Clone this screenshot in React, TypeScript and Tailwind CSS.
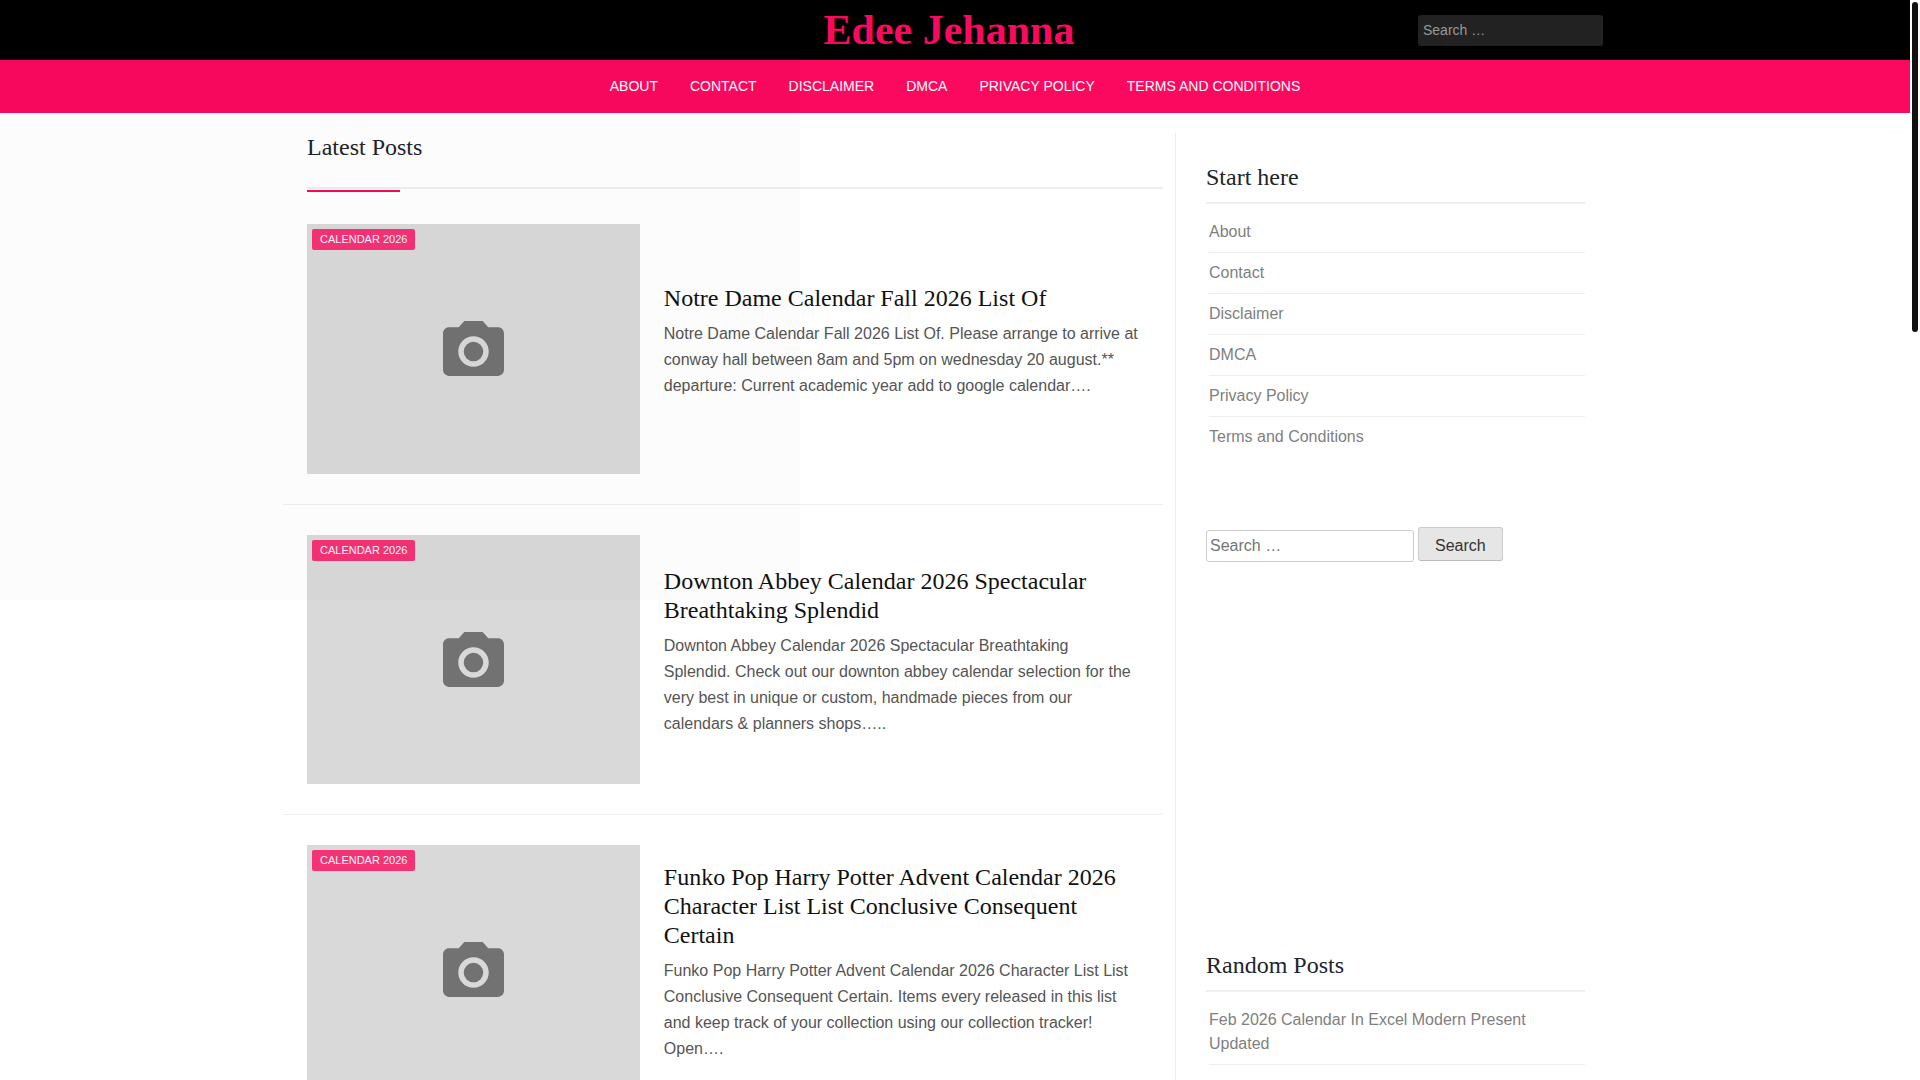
const pages = [
  "About",
  "Contact",
  "Disclaimer",
  "DMCA",
  "Privacy Policy",
  "Terms and Conditions"
];

const randomPosts = ["Feb 2026 Calendar In Excel Modern Present Updated"];

const posts = [
  {
    title: "Notre Dame Calendar Fall 2026 List Of",
    category: "Calendar 2026",
    excerpt:
      "Notre Dame Calendar Fall 2026 List Of. Please arrange to arrive at conway hall between 8am and 5pm on wednesday 20 august.** departure: Current academic year add to google calendar…."
  },
  {
    title: "Downton Abbey Calendar 2026 Spectacular Breathtaking Splendid",
    category: "Calendar 2026",
    excerpt:
      "Downton Abbey Calendar 2026 Spectacular Breathtaking Splendid. Check out our downton abbey calendar selection for the very best in unique or custom, handmade pieces from our calendars & planners shops….."
  },
  {
    title: "Funko Pop Harry Potter Advent Calendar 2026 Character List List Conclusive Consequent Certain",
    category: "Calendar 2026",
    excerpt:
      "Funko Pop Harry Potter Advent Calendar 2026 Character List List Conclusive Consequent Certain. Items every released in this list and keep track of your collection using our collection tracker! Open…."
  }
];

function CameraIcon() {
  return (
    <svg viewBox="2 2 20 18" className="w-[61px] h-[55px] fill-[#727272]" aria-hidden="true">
      <circle cx="12" cy="12" r="3.2" />
      <path d="M9 2L7.17 4H4c-1.1 0-2 .9-2 2v12c0 1.1.9 2 2 2h16c1.1 0 2-.9 2-2V6c0-1.1-.9-2-2-2h-3.17L15 2H9zm3 15c-2.76 0-5-2.24-5-5s2.24-5 5-5 5 2.24 5 5-2.24 5-5 5z" />
    </svg>
  );
}

function Header() {
  return (
    <header>
      <div className="bg-black">
        <div className="mx-auto max-w-[1320px] h-[60px] pr-3 grid grid-cols-[1fr_auto_1fr] items-center">
          <a
            href="#"
            className="col-start-2 font-['Liberation_Serif',serif] font-bold text-[42px] leading-[60px] text-[#fb095e]"
          >
            Edee Jehanna
          </a>
          <form className="flex justify-end">
            <input
              type="search"
              aria-label="Search for"
              placeholder="Search …"
              className="w-[185px] h-[31px] rounded-[3px] bg-[#222] px-[5px] text-sm text-white placeholder:text-[#999]"
            />
          </form>
        </div>
      </div>

      <nav className="bg-[#fb095e]">
        <ul className="flex justify-center">
          {pages.map(p => (
            <li key={p}>
              <a href="#" className="block px-4 text-sm leading-[53px] text-white uppercase">
                {p}
              </a>
            </li>
          ))}
        </ul>
      </nav>
    </header>
  );
}

function Post({ post }: { post: (typeof posts)[number] }) {
  return (
    <article className="flex items-center border-b border-[#eee] px-6 pb-[30px]">
      <div className="relative w-2/5 aspect-4/3 shrink-0 bg-[#d9d9d9] flex items-center justify-center">
        <CameraIcon />
        <a
          href="#"
          className="absolute left-[5px] top-[5px] rounded-[2px] bg-[#fb095e] px-2 text-[11px] leading-[21px] text-white uppercase opacity-80"
        >
          {post.category}
        </a>
      </div>

      <div className="pl-6 pb-[14px]">
        <h2 className="font-['Liberation_Serif',serif] text-2xl leading-[29px] text-[#111] mb-2">
          <a href="#">{post.title}</a>
        </h2>
        <p className="text-base leading-[26px] text-[#555]">{post.excerpt}</p>
      </div>
    </article>
  );
}

function WidgetTitle({ children }: { children: string }) {
  return (
    <h2 className="font-['Liberation_Serif',serif] text-2xl leading-[29px] text-[#212529] pb-[10px] mb-2 border-b-2 border-[#eee]">
      {children}
    </h2>
  );
}

function Sidebar() {
  return (
    <aside className="w-[452px] shrink-0 border-l border-[#eee] pl-[30px] pr-[42px]">
      <section className="pt-[30px] mb-10">
        <WidgetTitle>Start here</WidgetTitle>
        <ul className="pl-[3px]">
          {pages.map(p => (
            <li key={p} className="py-2 border-b border-[#eee] last:border-b-0">
              <a href="#" className="block text-base leading-6 text-[#808080]">{p}</a>
            </li>
          ))}
        </ul>
      </section>

      <section className="pt-[30px] mb-10">
        <form className="flex items-baseline gap-1">
          <input
            type="search"
            aria-label="Search for"
            placeholder="Search …"
            className="w-[208px] h-8 rounded-[3px] border border-[#ccc] px-[3px] text-base text-[#666] placeholder:text-[#757575]"
          />
          <button
            type="submit"
            className="rounded-[3px] border border-[#ccc] border-b-[#bbb] bg-[#e6e6e6] px-4 pt-[10px] pb-[6px] text-base leading-4 text-[#333]"
          >
            Search
          </button>
        </form>
      </section>

      {/* ad slot */}
      <section className="pt-[30px] mb-10">
        <div className="h-[249px]" />
      </section>

      <section className="pt-[30px] mb-10">
        <WidgetTitle>Random Posts</WidgetTitle>
        <ul className="pl-[3px]">
          {randomPosts.map(p => (
            <li key={p} className="py-2 border-b border-[#eee]">
              <a href="#" className="block text-base leading-6 text-[#808080]">{p}</a>
            </li>
          ))}
        </ul>
      </section>
    </aside>
  );
}

export default function App() {
  return (
    <div className="relative flex h-screen overflow-hidden bg-white font-['Liberation_Sans',sans-serif]">
      <div className="flex-1 overflow-y-auto [scrollbar-width:none]">
        <Header />

        <div className="mx-auto max-w-[1344px] mt-5 flex gap-3">
          <main className="flex-1">
            <div className="relative ml-6 mb-[35px] border-b-2 border-[#eee] pb-[25px]">
              <h1 className="font-['Liberation_Serif',serif] text-2xl leading-[29px] text-[#212529]">
                Latest Posts
              </h1>
              <span className="absolute left-0 -bottom-[5px] h-[2px] w-[93px] bg-[#fb095e]" />
            </div>

            <div className="flex flex-col gap-[30px]">
              {posts.map(post => (
                <Post key={post.title} post={post} />
              ))}
            </div>
          </main>

          <Sidebar />
        </div>
      </div>

      {/* scrollbar */}
      <div className="w-[10px] bg-white p-[2px]">
        <div className="h-[330px] w-[6px] rounded-full bg-[#111]" />
      </div>

      {/* faint tint in the top left corner */}
      <div className="pointer-events-none absolute left-0 top-0 h-[600px] w-[800px] bg-black/[0.012]" />
    </div>
  );
}
